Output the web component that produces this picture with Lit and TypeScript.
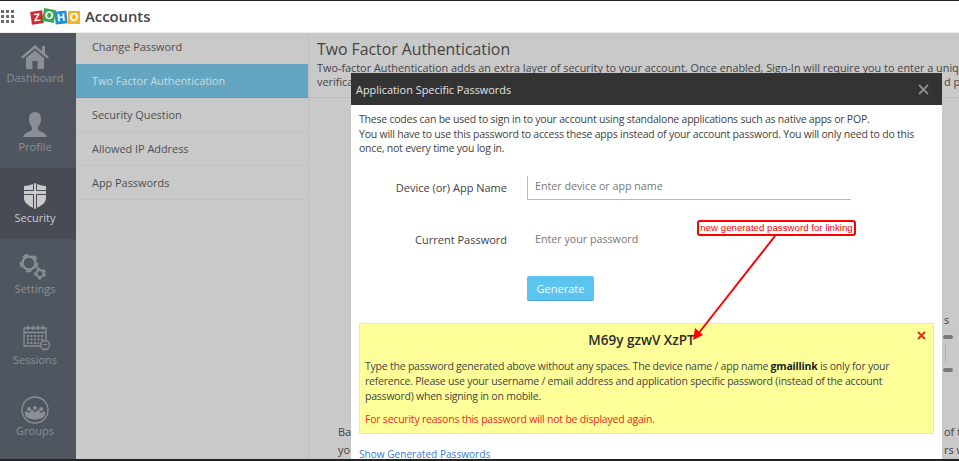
import { LitElement, html, css, svg } from "lit";
import { customElement } from "lit/decorators.js";

const gear = (cx: number, cy: number, r: number, w: number) => svg`
  <circle cx=${cx} cy=${cy} r=${r} fill="none" stroke="#8b8f95" stroke-width=${w}></circle>
  <circle cx=${cx} cy=${cy} r=${r + w * 0.85} fill="none" stroke="#8b8f95" stroke-width=${w * 0.7}
    stroke-dasharray=${`${(r + w) * 0.62} ${(r + w) * 0.62}`}></circle>`;

const icons: Record<string, unknown> = {
  home: svg`<path fill="#8b8f95" d="M14 2 L21 8 V3 H24 V10.500 L28 14 L26 15.500 L14 5.500 L2 15.500 L0 14 Z M5 15 L14 7.500 L23 15 V26 H16.500 V18 H11.500 V26 H5 Z"></path>`,
  profile: svg`<path fill="#8b8f95" d="M14 0 C18 0 20 3 20 7 C20 11 18 14 17 15.500 V18 C20 20 25 21 26 25 H2 C3 21 8 20 11 18 V15.500 C10 14 8 11 8 7 C8 3 10 0 14 0 Z"></path>`,
  shield: svg`
    <path fill="#c9cacb" d="M3 3 C7 3 10 2 14 0 C18 2 21 3 25 3 V15 C25 20 20 23 14 26 C8 23 3 20 3 15 Z"></path>
    <path fill="none" stroke="#474b54" d="M12.500 0 V7.500 H3 M15.500 0 V7.500 H25 M3 11.500 H12.500 V26 M25 11.500 H15.500 V26"></path>`,
  settings: svg`${gear(8, 9, 6.5, 2.4)}${gear(19, 19.5, 3.5, 2)}`,
  sessions: svg`
    <path fill="none" stroke="#8b8f95" stroke-width="1.300" d="M3 3 H25 V21 H3 Z M3 7.500 H25"></path>
    <path stroke="#8b8f95" stroke-width="1.500" d="M7 0.500 V5 M12 0.500 V5 M17 0.500 V5 M22 0.500 V5"></path>
    <path stroke="#8b8f95" stroke-width="2" stroke-dasharray="2 1.500" d="M6 11 H22 M6 14.500 H22 M6 18 H18"></path>
    <circle cx="24" cy="20" r="4.500" fill="#50565f" stroke="#8b8f95" stroke-width="1.300"></circle>
    <path stroke="#8b8f95" d="M21.500 19.500 H26"></path>`,
  groups: svg`
    <circle cx="14" cy="14" r="13" fill="none" stroke="#8b8f95" stroke-width="1.300"></circle>
    <g fill="#8b8f95">
      <circle cx="8" cy="13" r="2"></circle><circle cx="14" cy="12" r="2"></circle><circle cx="20" cy="13" r="2"></circle>
      <circle cx="5.500" cy="17" r="1.800"></circle><circle cx="11" cy="16" r="2"></circle><circle cx="17" cy="16" r="2"></circle><circle cx="22.500" cy="17" r="1.800"></circle>
      <path d="M4 19 C6 15 22 15 24 19 C21 25 7 25 4 19 Z"></path>
    </g>`,
};

const nav = [
  { label: "Dashboard", icon: "home" },
  { label: "Profile", icon: "profile" },
  { label: "Security", icon: "shield", active: true },
  { label: "Settings", icon: "settings" },
  { label: "Sessions", icon: "sessions" },
  { label: "Groups", icon: "groups" },
];

const submenu = [
  { label: "Change Password" },
  { label: "Two Factor Authentication", active: true },
  { label: "Security Question" },
  { label: "Allowed IP Address" },
  { label: "App Passwords" },
];

@customElement("app-root")
export class AppRoot extends LitElement {
  static styles = css`
    :host {
      display: flex;
      flex-direction: column;
      position: relative;
      width: 959px;
      height: 461px;
      overflow: hidden;
      background: #c9c9c9;
      font-family: "Open Sans", sans-serif;
      font-size: 11px;
    }
    .topbar {
      flex: none;
      display: flex;
      align-items: center;
      background: #fff;
      border-top: 1px solid #222;
      border-bottom: 1px solid #ededed;
      height: 31px;
      padding-left: 1px;
    }
    .apps {
      display: grid;
      grid-template-columns: repeat(3, 3px);
      grid-auto-rows: 3px;
      gap: 2px;
      margin-right: 17px;
    }
    .apps i {
      background: #6d6d6d;
    }
    .logo {
      display: flex;
      width: 49px;
      height: 16px;
      margin-right: 5px;
    }
    .tile {
      width: 12px;
      height: 13px;
      margin-top: 2px;
      color: #fff;
      font: 700 11px/13px "Liberation Sans", sans-serif;
      text-align: center;
    }
    .tile.z {
      background: #d8262d;
      transform: rotate(-8deg);
    }
    .tile.o1 {
      background: #3aa655;
      transform: rotate(10deg);
      margin-top: 0;
    }
    .tile.h {
      background: #1f8fd6;
      transform: rotate(-6deg);
    }
    .tile.o2 {
      background: #f2b32a;
      margin-left: 1px;
    }
    .product {
      font: 600 14.800px/20px "Open Sans", sans-serif;
      color: #444;
      margin-top: -2px;
    }
    .content {
      flex: 1;
      min-height: 0;
      display: flex;
    }
    .sidebar {
      flex: none;
      width: 76px;
      background: #50565f;
      display: flex;
      flex-direction: column;
    }
    .nav-item {
      flex: none;
      height: 71px;
      box-sizing: border-box;
      padding: 0 6px 13px 0;
      display: flex;
      flex-direction: column;
      align-items: center;
      justify-content: flex-end;
      color: #8b8f95;
      font-size: 11px;
      line-height: 16px;
    }
    .nav-item:first-child {
      height: 64px;
      padding-bottom: 11px;
    }
    .nav-item.active {
      background: #474b54;
      color: #c9cacb;
    }
    .nav-item svg {
      width: 28px;
      height: 26px;
      margin-bottom: 1px;
      overflow: visible;
    }
    .submenu {
      flex: none;
      width: 232px;
      border-right: 1px solid #bdbdbd;
      color: #4d4f52;
      font-size: 10.900px;
    }
    .sub-item {
      height: 34px;
      box-sizing: border-box;
      padding-left: 16px;
      display: flex;
      align-items: center;
      border-bottom: 1px solid #c1c1c1;
    }
    .sub-item:first-child {
      height: 31px;
      padding-bottom: 4px;
      border-bottom: 0;
    }
    .sub-item.active {
      background: #64a6c1;
      color: #c6dde7;
      border-bottom-color: #5c9ab3;
    }
    .main {
      flex: 1;
      min-width: 0;
      display: flex;
      flex-direction: column;
      overflow: hidden;
      color: #444;
    }
    .intro {
      padding: 6px 0 8px 8px;
      border-bottom: 1px solid #bdbdbd;
      white-space: nowrap;
      font-size: 10.850px;
    }
    .intro h1 {
      margin: 0 0 2px;
      font-size: 15.800px;
      font-weight: 400;
      line-height: 20px;
    }
    .intro p {
      margin: 0;
      line-height: 14px;
    }
    .intro .split {
      display: flex;
      justify-content: space-between;
    }
    .intro .split span:last-child {
      width: 15px;
    }
    .behind {
      flex: 1;
      display: flex;
      flex-direction: column;
      align-items: flex-end;
      padding-top: 215px;
    }
    .behind-tail {
      width: 15px;
      line-height: 14px;
    }
    .slider {
      width: 16px;
      height: 37px;
      margin-top: 8px;
      display: flex;
      flex-direction: column;
      justify-content: space-between;
    }
    .slider i {
      width: 10px;
      height: 4px;
      border-radius: 2px;
      background: #77797c;
    }
    .slider b {
      width: 1px;
      height: 19px;
      background: #8db5cc;
      margin-left: 2px;
    }
    .behind-lines {
      align-self: stretch;
      margin-top: 51px;
    }
    .behind-row {
      display: flex;
      justify-content: space-between;
      padding-left: 29px;
      line-height: 18px;
    }
    .behind-row span:last-child {
      width: 15px;
      white-space: nowrap;
    }
    .footer-bar {
      flex: none;
      height: 2px;
      background: #222;
    }
    .modal {
      position: absolute;
      left: 351px;
      top: 73px;
      width: 591px;
      height: 386px;
      background: #fff;
      overflow: hidden;
      color: #444;
    }
    .modal-head {
      height: 32px;
      background: #333;
      color: #e3e3e3;
      display: flex;
      align-items: center;
      justify-content: space-between;
      padding: 0 13px 0 5px;
      font-size: 10.900px;
    }
    .modal-head svg {
      width: 11px;
      height: 11px;
    }
    .modal-body {
      padding: 7px 8px 0;
    }
    .lead {
      margin: 0;
      width: 560px;
      line-height: 14.500px;
      font-size: 10.500px;
      letter-spacing: -0.22px;
      color: #3f3f3f;
    }
    .field {
      display: grid;
      grid-template-columns: 148px 324px;
      column-gap: 20px;
      align-items: center;
    }
    .field.first {
      margin-top: 20.500px;
    }
    .field.second {
      margin-top: 28px;
    }
    .field label {
      text-align: right;
      color: #3f3f3f;
      padding-bottom: 1px;
    }
    .field .input {
      height: 24px;
      box-sizing: border-box;
      padding: 0 0 4px 7px;
      display: flex;
      align-items: center;
      color: #777;
      font-size: 10.700px;
    }
    .field .input.line {
      border-left: 1px solid #bbb;
      border-bottom: 1px solid #bbb;
    }
    .field.second .input {
      padding: 0 0 2px 8px;
    }
    .generate {
      display: block;
      margin: 24px 0 0 168px;
      width: 67px;
      height: 25px;
      border: 0;
      border-bottom: 1px solid #4aa9d3;
      border-radius: 2px;
      background: #5bc5ef;
      color: #f2fbff;
      font: 500 11px "Open Sans", sans-serif;
      padding: 0;
    }
    .notice {
      position: relative;
      margin-top: 22px;
      height: 111px;
      box-sizing: border-box;
      width: 575px;
      background: #ffff99;
      border: 1px solid #f3f078;
      padding: 6px 5px 0;
      font-size: 10.500px;
      letter-spacing: -0.22px;
      line-height: 15px;
      color: #444;
    }
    .code {
      padding-right: 10px;
      text-align: center;
      font-size: 13.500px;
      letter-spacing: 0;
      font-weight: 600;
      line-height: 20px;
      color: #2d2d2d;
      margin-bottom: 9px;
    }
    .notice p {
      margin: 0;
    }
    .notice b {
      color: #222;
    }
    .notice .warn {
      color: #ff1a1a;
      margin-top: 8px;
    }
    .dismiss {
      position: absolute;
      right: 7px;
      top: 7px;
      width: 9px;
      height: 9px;
    }
    .show {
      display: block;
      margin-top: 13px;
      color: #3b78d8;
      font-size: 10.100px;
      line-height: 14px;
      text-decoration: underline;
    }
    .callout {
      position: absolute;
      left: 697px;
      top: 220px;
      width: 159px;
      height: 16px;
      box-sizing: border-box;
      border: 2px solid #f00;
      border-radius: 3px;
      background: #fff;
      color: #f00;
      font: 9.700px/12px "Liberation Sans", sans-serif;
      text-align: center;
      white-space: nowrap;
    }
    .arrow {
      position: absolute;
      left: 0;
      top: 0;
      width: 959px;
      height: 461px;
      pointer-events: none;
    }
  `;

  render() {
    return html`
      <div class="topbar">
        <div class="apps">${Array.from({ length: 9 }, () => html`<i></i>`)}</div>
        <div class="logo">
          <span class="tile z">Z</span><span class="tile o1">O</span><span class="tile h">H</span><span class="tile o2">O</span>
        </div>
        <div class="product">Accounts</div>
      </div>
      <div class="content">
        <nav class="sidebar">
          ${nav.map(
            (n) => html`<div class="nav-item ${n.active ? "active" : ""}">
              <svg viewBox="0 0 28 26">${icons[n.icon]}</svg>
              <span>${n.label}</span>
            </div>`
          )}
        </nav>
        <div class="submenu">
          ${submenu.map(
            (s) => html`<div class="sub-item ${s.active ? "active" : ""}">${s.label}</div>`
          )}
        </div>
        <div class="main">
          <div class="intro">
            <h1>Two Factor Authentication</h1>
            <p>Two-factor Authentication adds an extra layer of security to your account. Once enabled, Sign-In will require you to enter a unique</p>
            <p class="split"><span>verification</span><span>d pa</span></p>
          </div>
          <div class="behind">
            <div class="behind-tail">s</div>
            <div class="slider"><i></i><b></b><i></i></div>
            <div class="behind-lines">
              <div class="behind-row"><span>Ba</span><span>of t</span></div>
              <div class="behind-row"><span>yo</span><span>rs w</span></div>
            </div>
          </div>
        </div>
      </div>
      <div class="footer-bar"></div>

      <section class="modal">
        <div class="modal-head">
          <span>Application Specific Passwords</span>
          <svg viewBox="0 0 11 11"><path d="M1 1 L10 10 M10 1 L1 10" stroke="#8d8d8d" stroke-width="1.800"></path></svg>
        </div>
        <div class="modal-body">
          <p class="lead">
            These codes can be used to sign in to your account using standalone applications such as native apps or POP.<br />
            You will have to use this password to access these apps instead of your account password. You will only need to do this once, not every time you log in.
          </p>
          <div class="field first">
            <label>Device (or) App Name</label>
            <div class="input line">Enter device or app name</div>
          </div>
          <div class="field second">
            <label>Current Password</label>
            <div class="input">Enter your password</div>
          </div>
          <button class="generate">Generate</button>
          <div class="notice">
            <svg class="dismiss" viewBox="0 0 9 9"><path d="M1 1 L8 8 M8 1 L1 8" stroke="#e0311c" stroke-width="2"></path></svg>
            <div class="code">M69y gzwV XzPT</div>
            <p>Type the password generated above without any spaces. The device name / app name <b>gmaillink</b> is only for your reference. Please use your username / email address and application specific password (instead of the account password) when signing in on mobile.</p>
            <p class="warn">For security reasons this password will not be displayed again.</p>
          </div>
          <a class="show">Show Generated Passwords</a>
        </div>
      </section>

      <div class="callout">new generated password for linking</div>
      <svg class="arrow" viewBox="0 0 959 461">
        <path d="M775 236 L698 334" stroke="#f00" stroke-width="2" fill="none"></path>
        <path d="M693 340 L695 328 L703 335 Z" fill="#f00"></path>
      </svg>
    `;
  }
}
